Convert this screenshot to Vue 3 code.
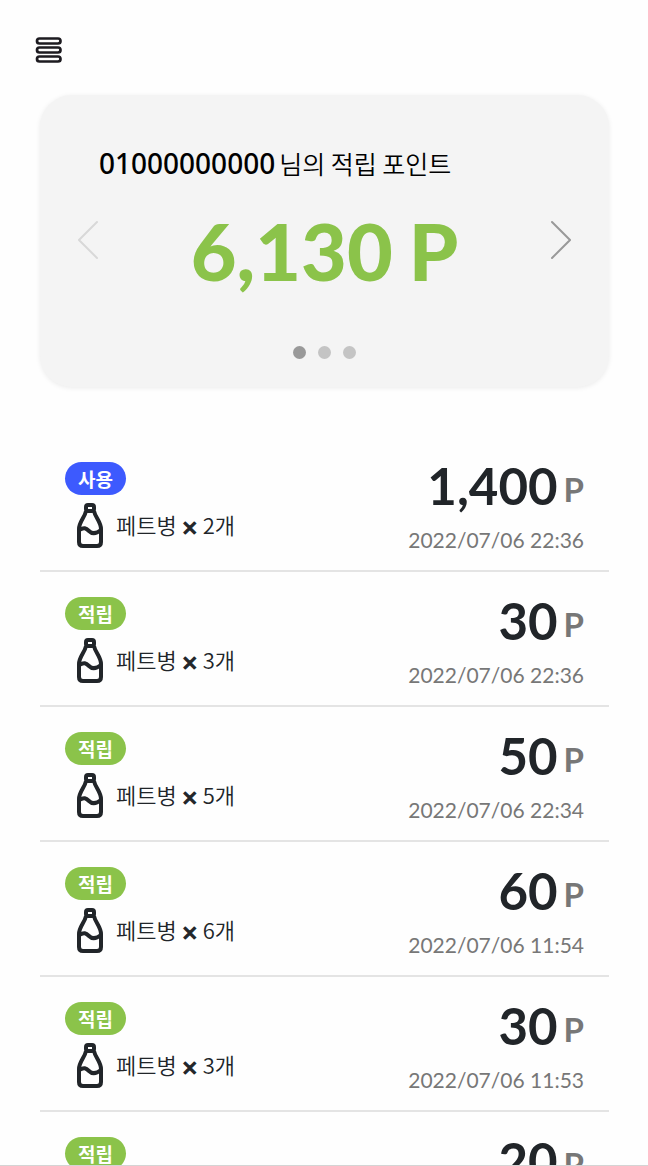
<script setup>
import { ref } from 'vue'

const userId = '01000000000'
const slide = ref(0)
const slides = [0, 1, 2]

const records = [
  { id: 1, kind: 'use', label: '사용', count: 2, amount: '1,400', date: '2022/07/06 22:36' },
  { id: 2, kind: 'save', label: '적립', count: 3, amount: '30', date: '2022/07/06 22:36' },
  { id: 3, kind: 'save', label: '적립', count: 5, amount: '50', date: '2022/07/06 22:34' },
  { id: 4, kind: 'save', label: '적립', count: 6, amount: '60', date: '2022/07/06 11:54' },
  { id: 5, kind: 'save', label: '적립', count: 3, amount: '30', date: '2022/07/06 11:53' }
]
const next = { kind: 'save', label: '적립', amount: '20' }
</script>

<template>
  <div class="page">
    <header class="top">
      <button class="menu" type="button" aria-label="메뉴">
        <svg width="28" height="28" viewBox="0 0 28 28" fill="none" stroke="#1d1b20" stroke-width="2.7">
          <rect x="2" y="2.500" width="23.500" height="5" rx="2.500" />
          <rect x="2" y="11.500" width="23.500" height="5" rx="2.500" />
          <rect x="2" y="20.500" width="23.500" height="5" rx="2.500" />
        </svg>
      </button>
    </header>

    <main>
      <section class="card">
        <p class="owner"><strong>{{ userId }}</strong><span>님의 적립 포인트</span></p>
        <div class="carousel">
          <button class="arrow prev" type="button" aria-label="이전" :disabled="slide === 0" @click="slide--">
            <svg width="20" height="40" viewBox="0 0 20 40" fill="none" stroke="currentColor" stroke-width="2" stroke-linecap="round">
              <path d="M19 2 1 20l18 18" />
            </svg>
          </button>
          <p class="total"><span>6,130</span><span>P</span></p>
          <button class="arrow" type="button" aria-label="다음" :disabled="slide === 2" @click="slide++">
            <svg width="20" height="40" viewBox="0 0 20 40" fill="none" stroke="currentColor" stroke-width="2" stroke-linecap="round">
              <path d="m1 2 18 18L1 38" />
            </svg>
          </button>
        </div>
        <div class="dots">
          <button
            v-for="n in slides"
            :key="n"
            type="button"
            class="dot"
            :class="{ on: n === slide }"
            :aria-label="`${n + 1}`"
            @click="slide = n"
          ></button>
        </div>
      </section>

      <ul class="records">
        <li v-for="r in records" :key="r.id" class="record">
          <div class="what">
            <span class="badge" :class="r.kind">{{ r.label }}</span>
            <div class="item">
              <svg width="26" height="46" viewBox="0 0 26 46" fill="none" stroke="#212529" stroke-width="4" stroke-linejoin="round">
                <rect x="9" y="3" width="8" height="6" rx="2" />
                <path d="M9 9C8 15 2 20 2 27v13q0 4 4 4h14q4 0 4-4V27c0-7-6-12-7-18" />
                <path d="M2 28c5-3 7-2 10 1s7 3 12-1" />
              </svg>
              <span>페트병</span><span class="times">×</span><span>{{ r.count }}개</span>
            </div>
          </div>
          <div class="value">
            <p class="amount"><span>{{ r.amount }}</span><span class="unit">P</span></p>
            <time class="date">{{ r.date }}</time>
          </div>
        </li>
        <li class="record">
          <span class="badge" :class="next.kind">{{ next.label }}</span>
          <div class="value">
            <p class="amount"><span>{{ next.amount }}</span><span class="unit">P</span></p>
          </div>
        </li>
      </ul>
    </main>
  </div>
</template>

<style>
body {
  background: #fff;
}
</style>

<style scoped>
.page {
  box-sizing: border-box;
  height: 100vh;
  overflow: hidden;
  border-bottom: 1px solid #d4d4d4;
  background: #fefefe;
  color: #212529;
  font-family: "Noto Sans CJK KR", "Noto Sans", sans-serif;
}
p,
ul {
  margin: 0;
  padding: 0;
}
button {
  display: block;
  padding: 0;
  border: 0;
  background: none;
}
svg {
  display: block;
  flex: none;
}
.top {
  padding: 36px 35px 31px;
}
main {
  padding: 0 39px 0 40px;
}
.card {
  padding: 48px 38px 28px;
  border-radius: 32px;
  background: #f4f4f4;
  box-shadow: 0 1px 5px rgba(0, 0, 0, 0.08);
}
.owner {
  display: flex;
  align-items: baseline;
  gap: 4px;
  padding-left: 21px;
  color: #000;
  font-size: 25px;
  font-weight: 350;
  line-height: 40px;
}
.owner strong {
  font-family: "Noto Sans", sans-serif;
  font-size: 28px;
  font-weight: 500;
}
.carousel {
  display: flex;
  align-items: center;
  justify-content: space-between;
  height: 114px;
}
.arrow {
  color: #999;
}
.arrow.prev {
  color: #d8d8d8;
}
.total {
  display: flex;
  gap: 16px;
  margin-top: 22px;
  color: #8bc34a;
  font-family: Lato, sans-serif;
  font-size: 79px;
  font-weight: 900;
  line-height: 96px;
}
.dots {
  display: flex;
  justify-content: center;
  gap: 12px;
  margin-top: 49px;
}
.dot {
  width: 13px;
  height: 13px;
  border-radius: 50%;
  background: #c4c4c4;
}
.dot.on {
  background: #999;
}
.records {
  margin-top: 50px;
  list-style: none;
}
.record {
  box-sizing: border-box;
  display: flex;
  align-items: flex-start;
  justify-content: space-between;
  height: 135px;
  padding: 25px 25px 0;
  border-bottom: 2px solid #e4e4e4;
}
.badge {
  display: block;
  width: 61px;
  border-radius: 17px;
  color: #fff;
  font-size: 19px;
  font-weight: 700;
  line-height: 33px;
  text-align: center;
}
.badge.use {
  background: #3d5afe;
}
.badge.save {
  background: #8bc34a;
}
.item {
  display: flex;
  align-items: center;
  margin-top: 7px;
  padding-left: 12px;
  font-size: 22px;
  font-weight: 350;
  line-height: 30px;
}
.item > span {
  margin-bottom: 2px;
}
.item svg {
  margin-right: 13px;
}
.item .times {
  width: 26px;
  margin: 4px 0 0;
  font-size: 18px;
  font-weight: 900;
  text-align: center;
  -webkit-text-stroke: 1px currentColor;
}
.value {
  font-family: Lato, sans-serif;
  text-align: right;
}
.amount {
  display: flex;
  align-items: flex-end;
  justify-content: flex-end;
  gap: 6px;
  font-size: 51px;
  font-weight: 700;
  line-height: 48px;
}
.unit {
  color: #777;
  font-size: 33px;
  line-height: 42px;
}
.date {
  display: block;
  margin-top: 15px;
  color: #777;
  font-size: 21px;
  line-height: 30px;
}
</style>
